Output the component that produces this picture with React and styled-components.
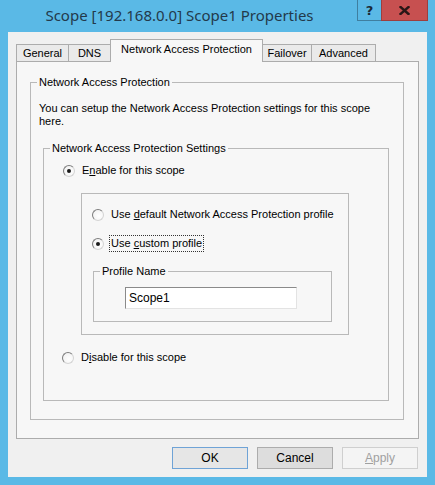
import React from 'react';
import styled, { createGlobalStyle } from 'styled-components';

const Global = createGlobalStyle`
  html, body {
    margin: 0;
    padding: 0;
    background: #5ab9e6;
  }
  body {
    font-family: "Liberation Sans", Arial, sans-serif;
    font-size: 11px;
    color: #000;
  }
`;

const Window = styled.div`
  width: 435px;
  height: 485px;
  box-sizing: border-box;
  background: #5ab9e6;
  display: flex;
  flex-direction: column;
`;

const TitleBar = styled.div`
  height: 32px;
  display: flex;
  align-items: flex-start;
  flex-shrink: 0;
`;

const Title = styled.div`
  flex: 1;
  text-align: center;
  padding-top: 5px;
  padding-left: 2px;
  font-family: "Noto Sans", "Open Sans", sans-serif;
  font-size: 15px;
  line-height: 20px;
  color: #23394b;
`;

const CaptionButtons = styled.div`
  display: flex;
  margin-right: 7px;
`;

const CaptionButton = styled.div`
  width: ${p => p.$w}px;
  height: 21px;
  box-sizing: border-box;
  display: flex;
  align-items: center;
  justify-content: center;
  background: ${p => p.$close ? '#c75050' : '#5ab9e6'};
  border: 1px solid ${p => p.$close ? '#9e3e3e' : '#3f7fa0'};
  border-top: none;
  ${p => !p.$close && 'border-right: none;'}
  font-family: "DejaVu Sans", sans-serif;
  font-weight: bold;
  font-size: 13px;
  color: #1a2a36;
`;

const Client = styled.div`
  flex: 1;
  margin: 0 8px 8px;
  background: #f0f0f0;
  display: flex;
  flex-direction: column;
  padding: 7px 8px 8px;
  box-sizing: border-box;
`;

const TabStrip = styled.div`
  display: flex;
  align-items: flex-end;
  height: 23px;
  margin-bottom: -1px;
  position: relative;
  z-index: 1;
`;

const Tab = styled.div`
  width: ${p => p.$w}px;
  height: ${p => p.$active ? 23 : 18}px;
  box-sizing: border-box;
  margin-left: ${p => p.$first ? 0 : -1}px;
  padding-top: ${p => p.$active ? 3 : 2}px;
  border: 1px solid #acacac;
  border-bottom: ${p => p.$active ? 'none' : '1px solid #acacac'};
  background: ${p => p.$active ? '#f7f7f7' : '#eaeaea'};
  text-align: center;
  line-height: 13px;
  color: #000;
  position: relative;
  z-index: ${p => p.$active ? 2 : 1};
`;

const Panel = styled.div`
  flex: 1;
  border: 1px solid #acacac;
  background: #f7f7f7;
  display: flex;
  flex-direction: column;
  padding: 14px 14px 18px 13px;
`;

const GroupBox = styled.fieldset`
  margin: 0;
  padding: 0;
  border: 1px solid #b9b9b9;
  display: flex;
  flex-direction: column;
  flex: ${p => p.$fill ? 1 : 'none'};
  min-width: 0;
`;

const Legend = styled.legend`
  margin-left: 6px;
  padding: 0 2px;
  line-height: 13px;
  color: #000;
`;

const GroupBody = styled.div`
  flex: 1;
  display: flex;
  flex-direction: column;
  padding: ${p => p.$pad};
`;

const Description = styled.p`
  margin: 13px 0 0;
  line-height: 13px;
`;

const Frame = styled.div`
  border: 1px solid #b9b9b9;
  margin: ${p => p.$margin};
  padding: 12px 16px 12px 10px;
  display: flex;
  flex-direction: column;
`;

const RadioRow = styled.div`
  display: flex;
  align-items: center;
  gap: 5px;
  height: 17px;
  margin: ${p => p.$margin || 0};
`;

const RadioCircle = styled.span`
  width: 12px;
  height: 12px;
  box-sizing: border-box;
  border-radius: 50%;
  border: 1px solid;
  border-color: #7c7c7c #d4d4d4 #d4d4d4 #7c7c7c;
  background: radial-gradient(circle at 60% 60%, #ffffff, #eeeeee);
  display: flex;
  align-items: center;
  justify-content: center;
  flex-shrink: 0;

  &::after {
    content: '';
    width: 4px;
    height: 4px;
    border-radius: 50%;
    background: ${p => p.$checked ? '#1a1a1a' : 'transparent'};
  }
`;

const RadioLabel = styled.span`
  line-height: 13px;
  padding: 1px;
  border: 1px dotted ${p => p.$focused ? '#333' : 'transparent'};
  white-space: nowrap;
`;

const TextBox = styled.div`
  width: 172px;
  height: 22px;
  box-sizing: border-box;
  margin: 9px 0 12px 31px;
  background: #fff;
  border: 1px solid;
  border-color: #8a8a8a #e3e3e3 #e3e3e3 #8a8a8a;
  padding: 0 3px;
  display: flex;
  align-items: center;
  font-size: 12px;
`;

const ButtonRow = styled.div`
  display: flex;
  justify-content: flex-end;
  gap: 9px;
  margin-top: 8px;
  padding-right: 1px;
`;

const Button = styled.div`
  width: 76px;
  height: 22px;
  box-sizing: border-box;
  display: flex;
  align-items: center;
  justify-content: center;
  border: 1px solid ${p => p.$default ? '#6fa3d6' : p.$disabled ? '#cfcfcf' : '#acacac'};
  background: ${p => p.$disabled ? '#f4f4f4' : p.$default ? '#e6e6e6' : '#dddddd'};
  color: ${p => p.$disabled ? '#a0a0a0' : '#000'};
  font-size: 12px;
`;

const tabs = [
  { label: 'General', w: 53 },
  { label: 'DNS', w: 43 },
  { label: 'Network Access Protection', w: 153, active: true },
  { label: 'Failover', w: 50 },
  { label: 'Advanced', w: 65 },
];

const CloseGlyph = () => (
  <svg width="11" height="9" viewBox="0 0 11 9">
    <path d="M1.5 1 L9.5 8 M9.5 1 L1.5 8" stroke="#2a1616" strokeWidth="2.4" strokeLinecap="square" />
  </svg>
);

const Radio = ({ checked, focused, margin, children }) => (
  <RadioRow $margin={margin}>
    <RadioCircle $checked={checked} />
    <RadioLabel $focused={focused}>{children}</RadioLabel>
  </RadioRow>
);

const App = () => (
  <>
    <Global />
    <Window>
      <TitleBar>
        <Title>Scope [192.168.0.0] Scope1 Properties</Title>
        <CaptionButtons>
          <CaptionButton $w={24}>?</CaptionButton>
          <CaptionButton $w={47} $close><CloseGlyph /></CaptionButton>
        </CaptionButtons>
      </TitleBar>
      <Client>
        <TabStrip>
          {tabs.map((t, i) => (
            <Tab key={t.label} $w={t.w} $active={t.active} $first={i === 0}>
              {t.label}
            </Tab>
          ))}
        </TabStrip>
        <Panel>
          <GroupBox $fill>
            <Legend>Network Access Protection</Legend>
            <GroupBody $pad="0 14px 18px 8px">
              <Description>
                You can setup the Network Access Protection settings for this scope
                <br />
                here.
              </Description>
              <GroupBox $fill style={{ marginTop: 14, marginLeft: 4 }}>
                <Legend>Network Access Protection Settings</Legend>
                <GroupBody $pad="0 0 0 19px">
                  <Radio checked margin="7px 0 0">
                    E<u>n</u>able for this scope
                  </Radio>
                  <Frame $margin="14px 39px 0 18px">
                    <Radio>
                      Use <u>d</u>efault Network Access Protection profile
                    </Radio>
                    <Radio checked focused margin="12px 0 0">
                      Use <u>c</u>ustom profile
                    </Radio>
                    <GroupBox style={{ marginTop: 13, marginLeft: 1 }}>
                      <Legend>Profile Name</Legend>
                      <TextBox>Scope1</TextBox>
                    </GroupBox>
                  </Frame>
                  <Radio margin="14px 0 0 -1px">
                    D<u>i</u>sable for this scope
                  </Radio>
                </GroupBody>
              </GroupBox>
            </GroupBody>
          </GroupBox>
        </Panel>
        <ButtonRow>
          <Button $default>OK</Button>
          <Button>Cancel</Button>
          <Button $disabled><span><u>A</u>pply</span></Button>
        </ButtonRow>
      </Client>
    </Window>
  </>
);

export default App;
